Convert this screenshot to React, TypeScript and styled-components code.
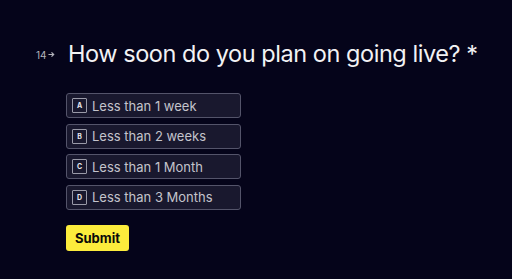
import React, { useState } from "react";
import styled, { createGlobalStyle } from "styled-components";

const GlobalStyle = createGlobalStyle`
  html, body {
    margin: 0;
    padding: 0;
    background: #05041a;
  }
  body {
    font-family: Inter, "Liberation Sans", sans-serif;
  }
`;

const options = [
  { key: "A", label: "Less than 1 week" },
  { key: "B", label: "Less than 2 weeks" },
  { key: "C", label: "Less than 1 Month" },
  { key: "D", label: "Less than 3 Months" },
];

const App = () => {
  const [selected, setSelected] = useState<string | null>(null);

  return (
    <>
      <GlobalStyle />
      <Page>
        <QuestionRow>
          <QuestionNumber>
            14
            <svg width="7" height="7" viewBox="0 0 8 8">
              <path d="M0.5 4h6M4 1.5L6.5 4 4 6.5" stroke="#b4b4bc" strokeWidth="1.4" fill="none" />
            </svg>
          </QuestionNumber>
          <QuestionTitle>How soon do you plan on going live? *</QuestionTitle>
        </QuestionRow>

        <Options>
          {options.map((option) => (
            <Option
              key={option.key}
              active={selected === option.key}
              onClick={() => setSelected(option.key)}
            >
              <KeyBadge>{option.key}</KeyBadge>
              <OptionLabel>{option.label}</OptionLabel>
            </Option>
          ))}
        </Options>

        <SubmitButton>Submit</SubmitButton>
      </Page>
    </>
  );
};

export default App;

const Page = styled.div`
  width: 512px;
  height: 279px;
  box-sizing: border-box;
  padding: 39px 0 0 36px;
  background: #05041a;
`;

const QuestionRow = styled.div`
  display: flex;
  align-items: center;
  gap: 6px;
`;

const QuestionNumber = styled.div`
  display: flex;
  align-items: center;
  gap: 1px;
  width: 26px;
  font-size: 10px;
  color: #b4b4bc;
  margin-top: 1px;
`;

const QuestionTitle = styled.h1`
  margin: 0;
  font-size: 23.5px;
  font-weight: 400;
  line-height: 30px;
  color: #f2f2f4;
  letter-spacing: -0.45px;
`;

const Options = styled.div`
  display: flex;
  flex-direction: column;
  gap: 5.5px;
  margin: 24px 0 0 30px;
`;

const Option = styled.div<{ active: boolean }>`
  display: flex;
  align-items: center;
  gap: 5px;
  width: 175px;
  height: 25px;
  box-sizing: border-box;
  padding: 0 4px 0 5px;
  border: 1px solid ${(props) => (props.active ? "#9a9ab0" : "#54546a")};
  border-radius: 3px;
  background: #19182e;
  cursor: pointer;
`;

const KeyBadge = styled.span`
  display: flex;
  align-items: center;
  justify-content: center;
  width: 15px;
  height: 15px;
  box-sizing: border-box;
  border: 1px solid #9a9aa8;
  border-radius: 1px;
  font-size: 7px;
  font-weight: 700;
  color: #e6e6ec;
`;

const OptionLabel = styled.span`
  font-size: 13px;
  color: #c4c4cc;
`;

const SubmitButton = styled.button`
  display: block;
  margin: 15px 0 0 30px;
  width: 63px;
  height: 26px;
  border: none;
  border-radius: 3px;
  background: #fcec3c;
  font-family: Inter, "Liberation Sans", sans-serif;
  font-size: 13px;
  font-weight: 700;
  color: #0a0a0a;
  cursor: pointer;
`;
